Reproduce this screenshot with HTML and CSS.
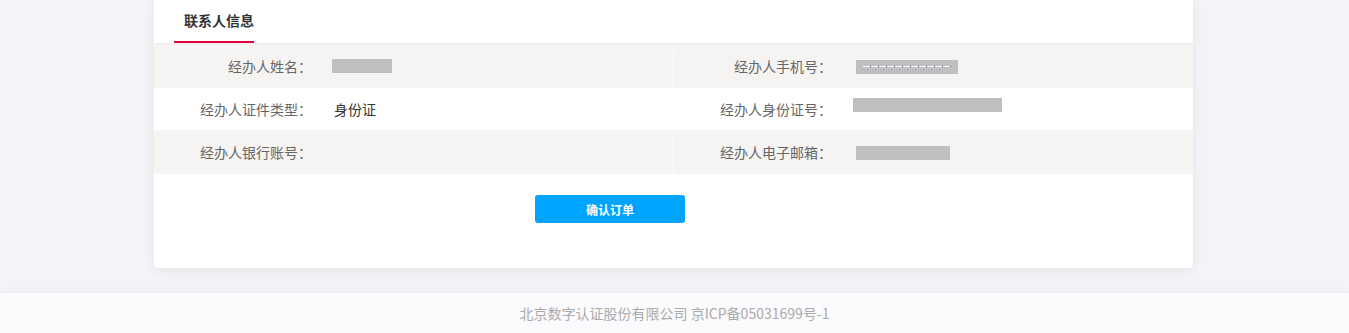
FILE: index.html
```html
<!DOCTYPE html>
<html lang="zh-CN">
<head>
    <meta charset="UTF-8">
    <meta name="viewport" content="width=device-width, initial-scale=1.0">
    <title>联系人信息</title>
    <link rel="stylesheet" href="styles.css">
</head>
<body>

<div class="card">
    <div class="tabs">
        <div class="tab">联系人信息</div>
    </div>

    <div class="row row-grey">
        <div class="cell">
            <div class="label">经办人姓名：</div>
            <div class="value"><span class="mask mask-name"></span></div>
        </div>
        <div class="cell">
            <div class="label">经办人手机号：</div>
            <div class="value"><span class="mask mask-phone"><i></i></span></div>
        </div>
    </div>

    <div class="row row-plain">
        <div class="cell">
            <div class="label">经办人证件类型：</div>
            <div class="value">身份证</div>
        </div>
        <div class="cell">
            <div class="label">经办人身份证号：</div>
            <div class="value"><span class="mask mask-id"></span></div>
        </div>
    </div>

    <div class="row row-grey">
        <div class="cell">
            <div class="label">经办人银行账号：</div>
            <div class="value"></div>
        </div>
        <div class="cell">
            <div class="label">经办人电子邮箱：</div>
            <div class="value"><span class="mask mask-email"></span></div>
        </div>
    </div>

    <div class="actions">
        <button class="btn btn-primary">确认订单</button>
    </div>
</div>

<div class="footer">北京数字认证股份有限公司 京ICP备05031699号-1</div>

</body>
</html>
```

FILE: styles.css
```css
body { margin: 0; background: #f4f4f8; font-family: "Noto Sans CJK SC", "Liberation Sans", sans-serif; font-size: 14px; color: #333; }

.card { width: 1039px; margin-left: calc(50% - 520.5px); background: #fff; border-radius: 0 0 4px 4px; box-shadow: 0 2px 12px rgba(0, 0, 0, 0.07); padding-bottom: 45px; }

.tabs { display: flex; height: 43px; padding-left: 20px; border-bottom: 1px solid #ededed; }
.tab { padding: 10px 0 8px 10px; width: 70px; line-height: 20px; font-weight: bold; font-size: 14px; color: #333; border-bottom: 2px solid #e4003f; }

.row { display: grid; grid-template-columns: 520px 519px; }
.row-grey { height: 44px; background: linear-gradient(#fff, #fff) no-repeat 519px 7px / 1px calc(100% - 7px), #f5f4f2; }
.row-plain { height: 42px; background: #fff; }

.cell { display: flex; align-items: center; }
.label { width: 158px; text-align: right; color: #666; line-height: 20px; white-space: nowrap; }
.value { margin-left: 22px; color: #333; line-height: 20px; display: flex; align-items: center; }

.mask { display: flex; align-items: center; justify-content: center; height: 14px; background: #bfbfbf; }
.mask-name { width: 60px; margin-left: -2px; }
.mask-phone { width: 102px; margin-left: 2px; margin-top: 1px; }
.mask-phone i { display: block; width: 88px; height: 1px; background: repeating-linear-gradient(90deg, #fff 0 7px, #3a5fa8 7px 8px); }
.mask-id { width: 149px; margin-left: -1px; margin-top: -8px; }
.mask-email { width: 94px; margin-left: 2px; margin-top: 1px; }

.actions { padding: 21px 0 0 381px; }
.btn { width: 150px; height: 28px; border: none; border-radius: 3px; font-family: inherit; font-size: 12px; font-weight: bold; cursor: pointer; padding: 0; }
.btn-primary { background: #00a4ff; color: #fff; }
.btn-primary:hover { background: #0093e6; }

.footer { margin-top: 25px; height: 40px; line-height: 40px; background: #fbfbfd; text-align: center; color: #aaa; font-size: 14px; box-shadow: 0 -2px 8px rgba(0, 0, 0, 0.03); }
```
